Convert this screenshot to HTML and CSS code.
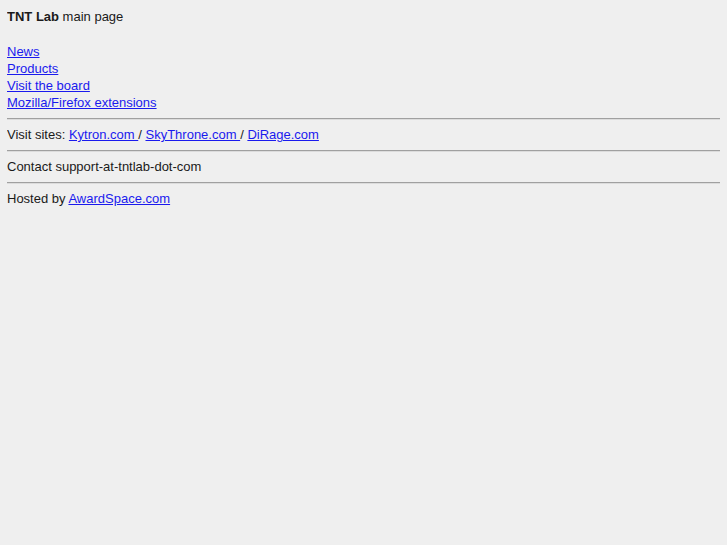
FILE: index.html
```html
<!DOCTYPE html>
<html>
<head>
<meta charset="utf-8">
<title>TNT Lab</title>
<link rel="stylesheet" href="styles.css">
</head>
<body>
<div class="block"><b>TNT Lab</b> main page<br><br>
<a href="#">News</a><br>
<a href="#">Products</a><br>
<a href="#">Visit the board</a><br>
<a href="#">Mozilla/Firefox extensions</a>
</div>
<hr class="rule">
<div class="block">Visit sites: <a href="#">Kytron.com </a> / <a href="#">SkyThrone.com </a> / <a href="#">DiRage.com </a></div>
<hr class="rule">
<div class="block">Contact support-at-tntlab-dot-com</div>
<hr class="rule">
<div class="block">Hosted by <a href="#">AwardSpace.com </a></div>
</body>
</html>
```
FILE: styles.css
```css
html, body {
  background: #efefef;
}
body {
  margin: 8px 7px 8px 7px;
  font-family: "Liberation Sans", Arial, sans-serif;
  font-size: 13px;
  line-height: 17.25px;
  color: #1a1a1a;
}
.block {
  margin: 0;
}
a {
  color: #1a1aee;
  text-decoration: underline;
}
.rule {
  margin: 6.375px 0;
  height: 0;
  border: 0;
  border-top: 1px solid #a0a0a0;
  border-bottom: 1px solid #dcdcdc;
}
```
